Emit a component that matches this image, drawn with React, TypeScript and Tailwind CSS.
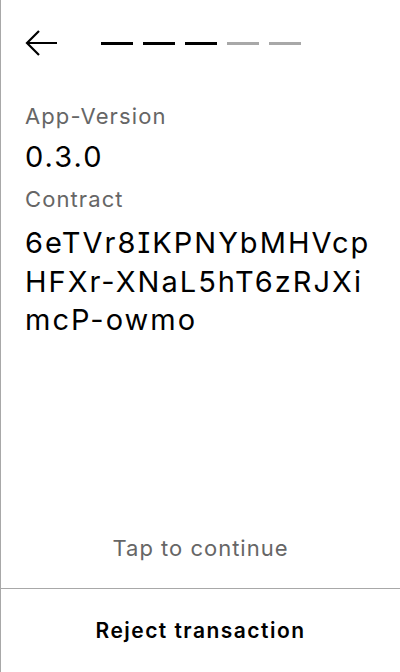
export default function App() {
  const steps = [true, true, true, false, false];
  const contract = ["6eTVr8IKPNYbMHVcp", "HFXr-XNaL5hT6zRJXi", "mcP-owmo"];

  return (
    <div className="flex h-[672px] w-[400px] flex-col border-l border-[#a8a8a8] bg-white font-['Inter',sans-serif] text-black [font-feature-settings:'cv08']">
      {/* header: back arrow + progress dashes */}
      <div className="flex h-[86px] items-center px-6">
        <button className="flex h-[28px] w-[34px] items-center">
          <svg width="34" height="28" viewBox="0 0 34 28" fill="none">
            <path
              d="M32 14H2M14 2L2 14l12 12"
              stroke="#000"
              strokeWidth="2.2"
              strokeLinecap="butt"
              strokeLinejoin="miter"
            />
          </svg>
        </button>
        <div className="ml-[42px] flex gap-[10px]">
          {steps.map((done, i) => (
            <div
              key={i}
              className={`h-[3px] w-[32px] ${done ? "bg-black" : "bg-[#a8a8a8]"}`}
            />
          ))}
        </div>
      </div>

      <div className="flex flex-1 flex-col px-6 pt-[16px]">
        <p className="text-[22px] leading-[28px] tracking-[0.05em] text-[#666]">App-Version</p>
        <p className="mt-[9px] text-[29px] leading-[36px] tracking-[0.07em]">0.3.0</p>
        <p className="mt-[10px] text-[22px] leading-[28px] tracking-[0.05em] text-[#666]">Contract</p>
        <div className="mt-[11px] text-[29px] leading-[38.5px] tracking-[0.07em]">
          {contract.map((line) => (
            <p key={line}>{line}</p>
          ))}
        </div>
      </div>

      <div className="pb-[26px] text-center text-[22px] leading-[28px] tracking-[0.045em] text-[#666]">
        Tap to continue
      </div>
      <button className="flex h-[84px] items-center justify-center border-t border-[#a8a8a8] text-[21px] font-semibold tracking-[0.07em]">
        Reject transaction
      </button>
    </div>
  );
}
